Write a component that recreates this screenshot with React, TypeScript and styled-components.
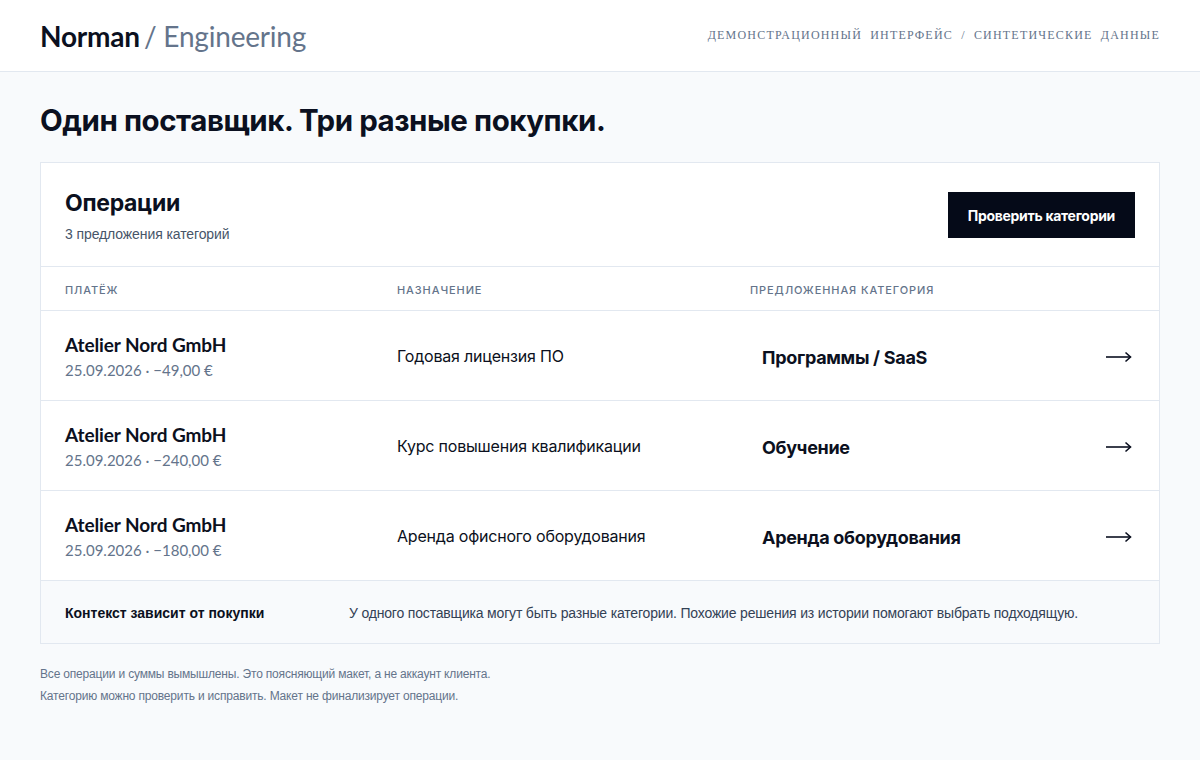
import React from "react";
import styled, { createGlobalStyle } from "styled-components";

interface Operation {
    payee: string;
    date: string;
    amount: string;
    purpose: string;
    category: string;
}

const operations: Operation[] = [
    {
        payee: "Atelier Nord GmbH",
        date: "25.09.2026",
        amount: "−49,00 €",
        purpose: "Годовая лицензия ПО",
        category: "Программы / SaaS",
    },
    {
        payee: "Atelier Nord GmbH",
        date: "25.09.2026",
        amount: "−240,00 €",
        purpose: "Курс повышения квалификации",
        category: "Обучение",
    },
    {
        payee: "Atelier Nord GmbH",
        date: "25.09.2026",
        amount: "−180,00 €",
        purpose: "Аренда офисного оборудования",
        category: "Аренда оборудования",
    },
];

const ArrowIcon = () => (
    <svg width="27" height="12" viewBox="0 0 27 12" fill="none">
        <path d="M1 6H25.5" stroke="#0b1020" strokeWidth="1.6" />
        <path d="M20.5 1.5L25.5 6L20.5 10.5" stroke="#0b1020" strokeWidth="1.6" />
    </svg>
);

export default function App() {
    return (
        <>
            <GlobalStyle />
            <Page>
                <Header>
                    <Logo>
                        <LogoMain>Norman</LogoMain>
                        <LogoSub>/ Engineering</LogoSub>
                    </Logo>
                    <Tagline>Демонстрационный интерфейс / Синтетические данные</Tagline>
                </Header>
                <Main>
                    <Title>Один поставщик. Три разные покупки.</Title>
                    <Card>
                        <CardHead>
                            <div>
                                <CardTitle>Операции</CardTitle>
                                <CardSub>3 предложения категорий</CardSub>
                            </div>
                            <PrimaryButton>Проверить категории</PrimaryButton>
                        </CardHead>
                        <HeadRow>
                            <HeadCell>Платёж</HeadCell>
                            <HeadCell>Назначение</HeadCell>
                            <HeadCell>Предложенная категория</HeadCell>
                        </HeadRow>
                        {operations.map((op, idx) => (
                            <Row key={idx}>
                                <div>
                                    <Payee>{op.payee}</Payee>
                                    <Meta>
                                        {op.date} · {op.amount}
                                    </Meta>
                                </div>
                                <Purpose>{op.purpose}</Purpose>
                                <CategoryCell>
                                    <Category>{op.category}</Category>
                                    <ArrowIcon />
                                </CategoryCell>
                            </Row>
                        ))}
                        <ContextBar>
                            <ContextLabel>Контекст зависит от покупки</ContextLabel>
                            <ContextText>
                                У одного поставщика могут быть разные категории. Похожие решения из
                                истории помогают выбрать подходящую.
                            </ContextText>
                        </ContextBar>
                    </Card>
                    <Notes>
                        <p>Все операции и суммы вымышлены. Это поясняющий макет, а не аккаунт клиента.</p>
                        <p>Категорию можно проверить и исправить. Макет не финализирует операции.</p>
                    </Notes>
                </Main>
            </Page>
        </>
    );
}

const GlobalStyle = createGlobalStyle`
    html, body {
        margin: 0;
        padding: 0;
        background: #f8fafc;
    }
    body {
        font-family: Inter, "Noto Sans", sans-serif;
        color: #0b1020;
    }
    p {
        margin: 0;
    }
`;

const Page = styled.div`
    min-height: 760px;
    background: #f8fafc;
`;

const Header = styled.header`
    height: 72px;
    box-sizing: border-box;
    padding: 0 40px;
    display: flex;
    align-items: center;
    justify-content: space-between;
    background: #fff;
    border-bottom: 1px solid #e2e8f0;
`;

const Logo = styled.div`
    display: flex;
    align-items: baseline;
    gap: 4px;
    font-family: Lato, Inter, sans-serif;
    font-size: 28px;
    letter-spacing: -0.2px;
    padding-top: 1px;
`;

const LogoMain = styled.span`
    font-weight: 700;
    color: #0b1020;
`;

const LogoSub = styled.span`
    font-weight: 400;
    color: #64748b;
`;

const Tagline = styled.div`
    font-family: "Liberation Serif", "DejaVu Serif", serif;
    font-size: 12px;
    letter-spacing: 1.2px;
    word-spacing: 4px;
    text-transform: uppercase;
    color: #64748b;
`;

const Main = styled.main`
    padding: 30px 40px 0;
`;

const Title = styled.h1`
    margin: 0 0 24px;
    font-size: 29.5px;
    font-weight: 700;
    letter-spacing: -0.45px;
    line-height: 36px;
    color: #0b1020;
`;

const Card = styled.section`
    background: #fff;
    border: 1px solid #e2e8f0;
`;

const CardHead = styled.div`
    height: 104px;
    box-sizing: border-box;
    padding: 1px 24px 0;
    display: flex;
    align-items: center;
    justify-content: space-between;
    border-bottom: 1px solid #e2e8f0;
`;

const CardTitle = styled.h2`
    margin: 0;
    font-size: 23px;
    font-weight: 700;
    letter-spacing: -0.3px;
    line-height: 30px;
    color: #0b1020;
`;

const CardSub = styled.p`
    margin-top: 8px;
    font-family: "Liberation Sans", Arial, sans-serif;
    font-size: 14px;
    letter-spacing: -0.1px;
    color: #475569;
`;

const PrimaryButton = styled.button`
    height: 46px;
    padding: 0 20px;
    border: none;
    background: #050a18;
    color: #fff;
    font-family: Inter, sans-serif;
    font-size: 14px;
    font-weight: 700;
    letter-spacing: -0.3px;
    cursor: pointer;
`;

const Columns = styled.div`
    display: grid;
    grid-template-columns: 332px 353px 1fr;
    padding: 0 24px;
    align-items: center;
    border-bottom: 1px solid #e2e8f0;
`;

const HeadRow = styled(Columns)`
    height: 44px;
    padding-top: 2px;
    box-sizing: border-box;
`;

const HeadCell = styled.div`
    font-size: 11px;
    font-weight: 500;
    letter-spacing: 0.9px;
    text-transform: uppercase;
    color: #64748b;
`;

const Row = styled(Columns)`
    height: 90px;
    box-sizing: border-box;
    padding-top: 1px;
`;

const Payee = styled.div`
    font-family: Lato, Inter, sans-serif;
    font-size: 19px;
    font-weight: 700;
    letter-spacing: -0.1px;
    line-height: 24px;
    color: #0b1020;
`;

const Meta = styled.div`
    margin-top: 4px;
    font-family: Lato, Inter, sans-serif;
    font-size: 15px;
    color: #64748b;
`;

const Purpose = styled.div`
    font-size: 16px;
    letter-spacing: -0.2px;
    color: #0b1020;
`;

const CategoryCell = styled.div`
    display: flex;
    align-items: center;
    justify-content: space-between;
    padding-left: 12px;
    padding-right: 3px;
    padding-top: 2px;
`;

const Category = styled.div`
    font-size: 18px;
    font-weight: 700;
    letter-spacing: -0.3px;
    color: #0b1020;
`;

const ContextBar = styled.div`
    height: 62px;
    padding: 1px 24px 0;
    box-sizing: border-box;
    display: flex;
    align-items: center;
    background: #f8fafc;
`;

const ContextLabel = styled.div`
    width: 284px;
    flex-shrink: 0;
    font-family: "Liberation Sans", Arial, sans-serif;
    font-size: 14px;
    font-weight: 700;
    color: #0b1020;
`;

const ContextText = styled.div`
    font-family: "Liberation Sans", Arial, sans-serif;
    font-size: 14px;
    letter-spacing: -0.18px;
    color: #334155;
`;

const Notes = styled.div`
    margin-top: 22px;
    display: flex;
    flex-direction: column;
    gap: 6px;
    font-family: "Liberation Sans", Arial, sans-serif;
    font-size: 12px;
    letter-spacing: -0.18px;
    line-height: 16px;
    color: #64748b;
`;
